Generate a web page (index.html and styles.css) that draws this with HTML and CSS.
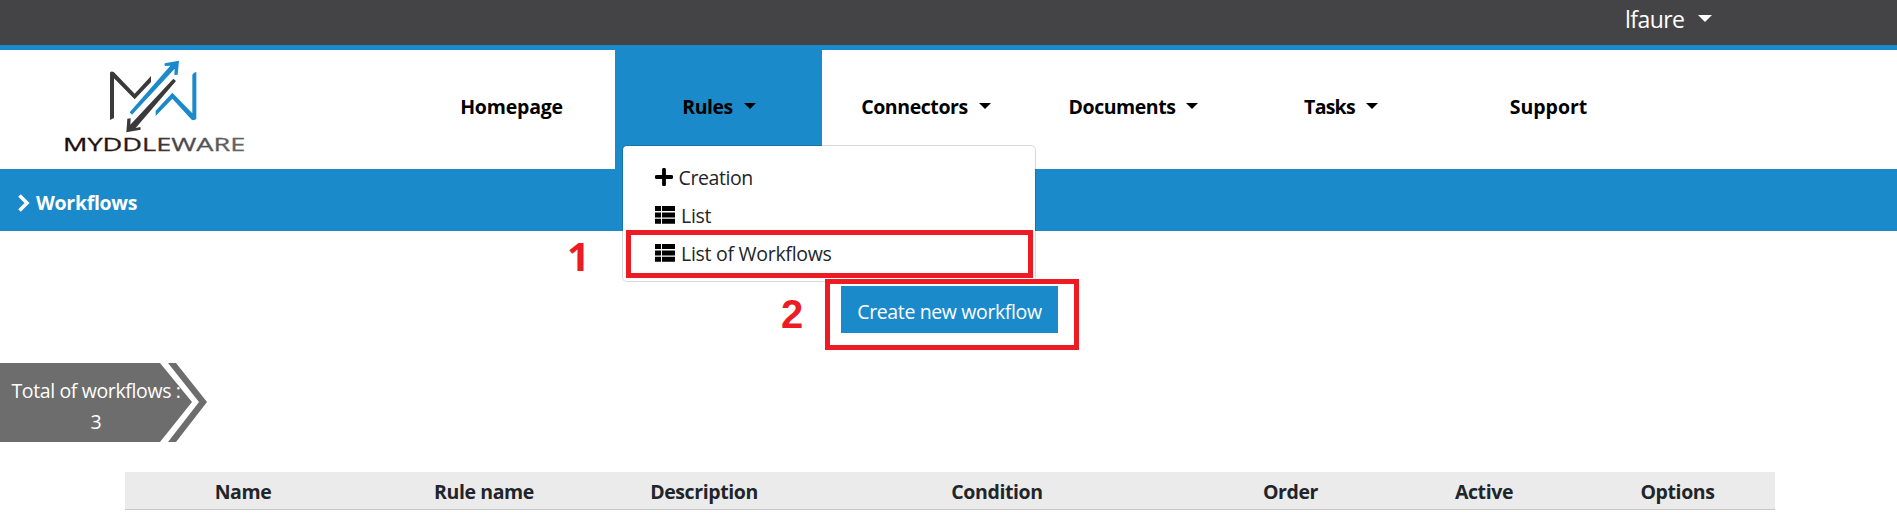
FILE: index.html
```html
<!DOCTYPE html>
<html lang="en">
<head>
<meta charset="utf-8">
<title>Workflows</title>
<link rel="stylesheet" href="styles.css">
</head>
<body>
<div class="topbar"><span class="user">lfaure</span><i class="caret"></i></div>
<header class="header">
  <svg class="logo" viewBox="60 45 570 300">
    <defs><linearGradient id="ink"><stop offset="0" stop-color="#1d0806"/><stop offset=".45" stop-color="#2b1d1c"/><stop offset=".6" stop-color="#444"/><stop offset="1" stop-color="#666"/></linearGradient></defs>
    <g fill="#3a3a3a">
      <path d="M210 240V98Q214 92 222 97L284 161L333 108V126L284 178L222 115V234Z"/>
      <path d="M400 116L408 123L287 264L301 261L302 269L259 277L262 236L272 235L271 254Z"/>
    </g>
    <g fill="#1a8acb">
      <path d="M269 217L391 77L374 78V70L417 62L413 104L403 105L404 86L276 224Z"/>
      <path d="M347 212L397 158L457 220V104Q461 96 469 96V236Q463 243 455 239L397 176L347 228Z"/>
    </g>
    <text class="brand" x="69" y="333" textLength="547" lengthAdjust="spacingAndGlyphs" fill="url(#ink)">MYDDLEWARE</text>
  </svg>
  <nav class="nav">
    <a class="tab"><span class="t-home">Homepage</span></a>
    <a class="tab active"><span class="t-rules">Rules</span><i class="caret"></i></a>
    <a class="tab"><span class="t-conn">Connectors</span><i class="caret"></i></a>
    <a class="tab"><span class="t-docs">Documents</span><i class="caret"></i></a>
    <a class="tab"><span class="t-tasks">Tasks</span><i class="caret"></i></a>
    <a class="tab"><span class="t-supp">Support</span></a>
  </nav>
  <div class="menu">
    <a class="item"><svg class="plus" viewBox="0 0 18 18"><path d="M9 1.6V16.4M1.6 9H16.4"/></svg><span class="m-create">Creation</span></a>
    <a class="item"><svg class="list" viewBox="0 0 20 18"><path d="M0 0h6v5H0zM7 0h13v5H7zM0 6.4h6v5H0zM7 6.4h13v5H7zM0 12.8h6v5H0zM7 12.8h13v5H7z"/></svg><span class="m-list">List</span></a>
    <a class="item"><svg class="list" viewBox="0 0 20 18"><path d="M0 0h6v5H0zM7 0h13v5H7zM0 6.4h6v5H0zM7 6.4h13v5H7zM0 12.8h6v5H0zM7 12.8h13v5H7z"/></svg><span class="m-flows">List of Workflows</span></a>
  </div>
</header>
<div class="crumb"><svg class="chev" viewBox="0 0 12 18"><path d="M1.5 1.5L9 9L1.5 16.5"/></svg><span class="c-text">Workflows</span></div>
<main>
  <div class="actions"><button class="create"><span>Create new workflow</span></button></div>
  <div class="total">
    <svg class="ribbon" viewBox="0 0 208 79"><path d="M0 0H160L192 39L160 79H0ZM168 0H176L207 39L176 79H168L199 39Z"/></svg>
    <div class="total-text"><span class="tt">Total of workflows :</span><br>3</div>
  </div>
  <div class="thead">
    <span>Name</span><span>Rule name</span><span>Description</span><span>Condition</span><span>Order</span><span>Active</span><span>Options</span>
  </div>
</main>
<div class="mark mark-one"></div><b class="num num-one">1</b>
<div class="mark mark-two"></div><b class="num num-two">2</b>
</body>
</html>
```
FILE: styles.css
```css
* { box-sizing: border-box; }
body { margin: 0; height: 516px; position: relative; overflow: hidden; background: #fff; color: #212529; font: 19.5px/30px "Open Sans", "Noto Sans", sans-serif; white-space: nowrap; }
.topbar { height: 50px; background: #444446; border-bottom: 5px solid #1a8acb; display: flex; align-items: flex-start; padding: 4px 0 0 1625px; color: #fff; font-size: 23px; }
.user { width: 59px; letter-spacing: -0.55px; }
.caret { width: 0; height: 0; border: 6px solid transparent; border-top-color: currentColor; border-bottom: 0; margin-left: 11px; }
.topbar .caret { border-width: 7px 7px 0; margin: 11px 0 0 14px; }
.header { height: 119px; position: relative; display: flex; }
.logo { width: 190px; height: 100px; margin: 5px 158px 0 60px; }
.brand { font: 54px "Open Sans", sans-serif; stroke: url(#ink); stroke-width: .8px; }
.nav { display: flex; }
.tab { width: 207px; height: 119px; display: flex; align-items: center; justify-content: center; color: #000; font-weight: 700; padding-bottom: 5px; }
.t-home { letter-spacing: -0.2px; }
.t-rules { letter-spacing: -0.5px; margin-left: 1px; }
.t-conn { letter-spacing: -0.42px; margin-left: 1px; }
.t-docs { letter-spacing: -0.46px; margin-left: 2px; }
.t-tasks { letter-spacing: -0.75px; margin-left: 3px; }
.t-supp { letter-spacing: -0.05px; margin-left: 4px; }
.active { background: #1a8acb; }
.tab .caret { margin-top: -3px; }
.menu { position: absolute; left: 622px; top: 95px; width: 414px; height: 137px; z-index: 2; background: #fff; background-clip: padding-box; border: 1px solid rgba(0,0,0,.15); border-radius: 5px; padding: 12px 0 0 32px; }
.item { display: flex; align-items: center; height: 38px; color: #212529; letter-spacing: -0.28px; }
.item span { padding-top: 1px; }
.m-create { letter-spacing: -0.4px; }
.plus { width: 18px; height: 18px; margin-right: 5.5px; fill: none; stroke: #000; stroke-width: 3.8; stroke-linecap: round; }
.list { width: 20px; height: 18px; margin-right: 6px; fill: #000; }
.crumb { height: 62px; background: #1a8acb; color: #fff; font-weight: 700; display: flex; align-items: center; padding: 5px 0 0 18px; letter-spacing: -0.3px; }
.chev { width: 12px; height: 18px; margin-right: 6px; fill: none; stroke: #fff; stroke-width: 3.6; }
.actions { padding: 55px 0 0 841px; height: 132px; }
.create { width: 217px; height: 47px; border: 0; background: #1a8acb; color: #fff; font: inherit; letter-spacing: -0.37px; padding: 4px 0 0; display: block; }
.total { height: 79px; width: 208px; position: relative; }
.ribbon { display: block; width: 208px; height: 79px; fill: #6d6d6d; }
.total-text { position: absolute; left: 0; top: 12px; width: 192px; text-align: center; color: #fff; line-height: 31px; }
.tt { letter-spacing: -0.37px; }
.thead { margin: 30px 0 0 125px; width: 1650px; height: 38px; background: #ebebeb; border-bottom: 1px solid #c6c8ca; display: grid; grid-template-columns: 236px 246px 194px 392px 195px 192px 195px; align-items: center; text-align: center; font-weight: 700; letter-spacing: -0.4px; padding-top: 2px; }
.mark { position: absolute; z-index: 3; border: 5px solid #ed1c24; }
.mark-one { left: 626px; top: 230px; width: 407px; height: 48px; }
.mark-two { left: 825px; top: 279px; width: 254px; height: 71px; }
.num { position: absolute; color: #ed1c24; font: 700 40px/40px "Liberation Sans", Arial, sans-serif; }
.num-one { left: 567px; top: 236px; font-family: "Open Sans", sans-serif; }
.num-two { left: 781px; top: 294px; }
```
